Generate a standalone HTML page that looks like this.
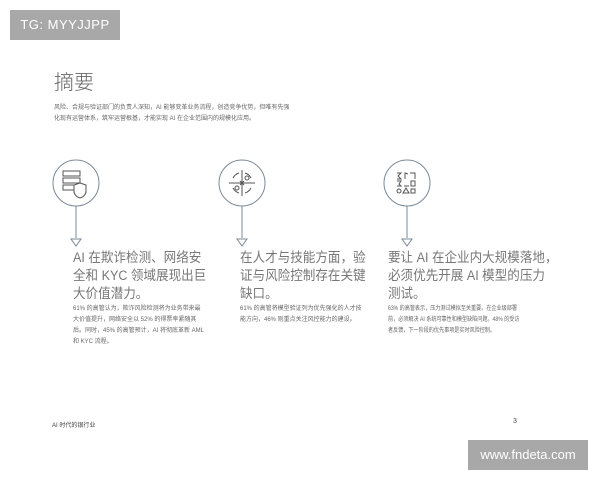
<!DOCTYPE html>
<html><head><meta charset="utf-8"><style>
body{margin:0;width:600px;height:480px;background:#fff;position:relative;overflow:hidden;font-family:"Liberation Sans","Noto Sans CJK SC",sans-serif;color:#555}
.a{position:absolute;white-space:nowrap}
.tg{left:10px;top:10px;width:110px;height:30px;background:#a8a8a8;color:#fff;font-size:13px;line-height:30px;text-align:center;letter-spacing:.5px}
.wm{left:468px;top:440px;width:120px;height:30px;background:#a8a8a8;color:#fff;font-size:13px;line-height:30px;text-align:center}
h1{position:absolute;left:54px;top:66px;margin:0;font-size:20px;font-weight:300;color:#666}
.p{left:54px;top:103px;font-size:6px;line-height:11px;color:#666}
.h{font-size:13.5px;line-height:18px;color:#777;transform:scaleX(.93);transform-origin:0 0}
.b{font-size:6px;line-height:11px;color:#666;transform-origin:0 0}
</style></head><body>
<div class="a tg">TG: MYYJJPP</div>
<h1>摘要</h1>
<div class="a p">风险、合规与验证部门的负责人深知，AI 能够变革业务流程，创造竞争优势，但唯有先强<br>化现有运营体系，筑牢运营根基，才能实现 AI 在企业范围内的规模化应用。</div>
<svg class="a" style="left:0;top:0" width="600" height="260">
<g fill="none" stroke="#7a8a9a" stroke-width="1">
<circle cx="76" cy="183" r="23"/><line x1="76" y1="206" x2="76" y2="238"/><path d="M71 239h10l-5 7z"/>
<circle cx="242" cy="183" r="23"/><line x1="242" y1="206" x2="242" y2="238"/><path d="M237 239h10l-5 7z"/>
<circle cx="407" cy="183" r="23"/><line x1="407" y1="206" x2="407" y2="238"/><path d="M402 239h10l-5 7z"/>
</g>
<g fill="none" stroke="#555" stroke-width="1">
<rect x="63" y="171" width="17" height="5"/><rect x="63" y="178" width="17" height="5"/><rect x="63" y="185" width="12" height="5"/>
<path d="M80 183l6 2v6q0 5-6 7q-6-2-6-7v-6z" fill="#fff"/>
<line x1="229" y1="183" x2="255" y2="183"/><line x1="242" y1="170" x2="242" y2="196"/>
<path d="M233 178a10 10 0 0 1 6-5M251 188a10 10 0 0 1-6 5M233 188a10 10 0 0 0 6 5M251 178a10 10 0 0 0-6-5"/>
<circle cx="247" cy="178" r="2"/><circle cx="237" cy="188" r="2"/><path d="M240 181l4 4M244 181l-4 4"/>
<path d="M397 173h4l-3 3 3 3h-4M405 179v-6l3 1M410 173h5v6"/>
<path d="M397 181h4l-2 3 2 2h-4M404 186h5M411 181h4v5h-4z"/>
<circle cx="399" cy="191" r="2"/><path d="M403 193l3-5 3 5z"/><rect x="411" y="189" width="4" height="4"/>
</g></svg>
<div class="a h" style="left:73px;top:249px">AI 在欺诈检测、网络安<br>全和 KYC 领域展现出巨<br>大价值潜力。</div>
<div class="a h" style="left:240px;top:249px">在人才与技能方面，验<br>证与风险控制存在关键<br>缺口。</div>
<div class="a h" style="left:388px;top:249px">要让 AI 在企业内大规模落地，<br>必须优先开展 AI 模型的压力<br>测试。</div>
<div class="a b" style="left:73px;top:304px">61% 的高管认为，欺诈风险检测将为业务带来最<br>大价值提升，网络安全以 52% 的得票率紧随其<br>后。同时，45% 的高管预计，AI 将彻底革新 AML<br>和 KYC 流程。</div>
<div class="a b" style="left:240px;top:304px">61% 的高管将模型验证列为优先强化的人才技<br>能方向，46% 则重点关注风控能力的建设。</div>
<div class="a b" style="left:388px;top:304px;transform:scaleX(.85)">63% 的高管表示，压力测试模拟至关重要。在企业级部署<br>前，必须解决 AI 系统可靠性和模型缺陷问题。48% 的受访<br>者反馈，下一阶段的优先事项是实时风险控制。</div>
<div class="a" style="left:52px;top:420px;font-size:6px;color:#444">AI 时代的银行业</div>
<div class="a" style="left:513px;top:418px;font-size:7px;color:#444">3</div>
<div class="a wm">www.fndeta.com</div>
</body></html>
